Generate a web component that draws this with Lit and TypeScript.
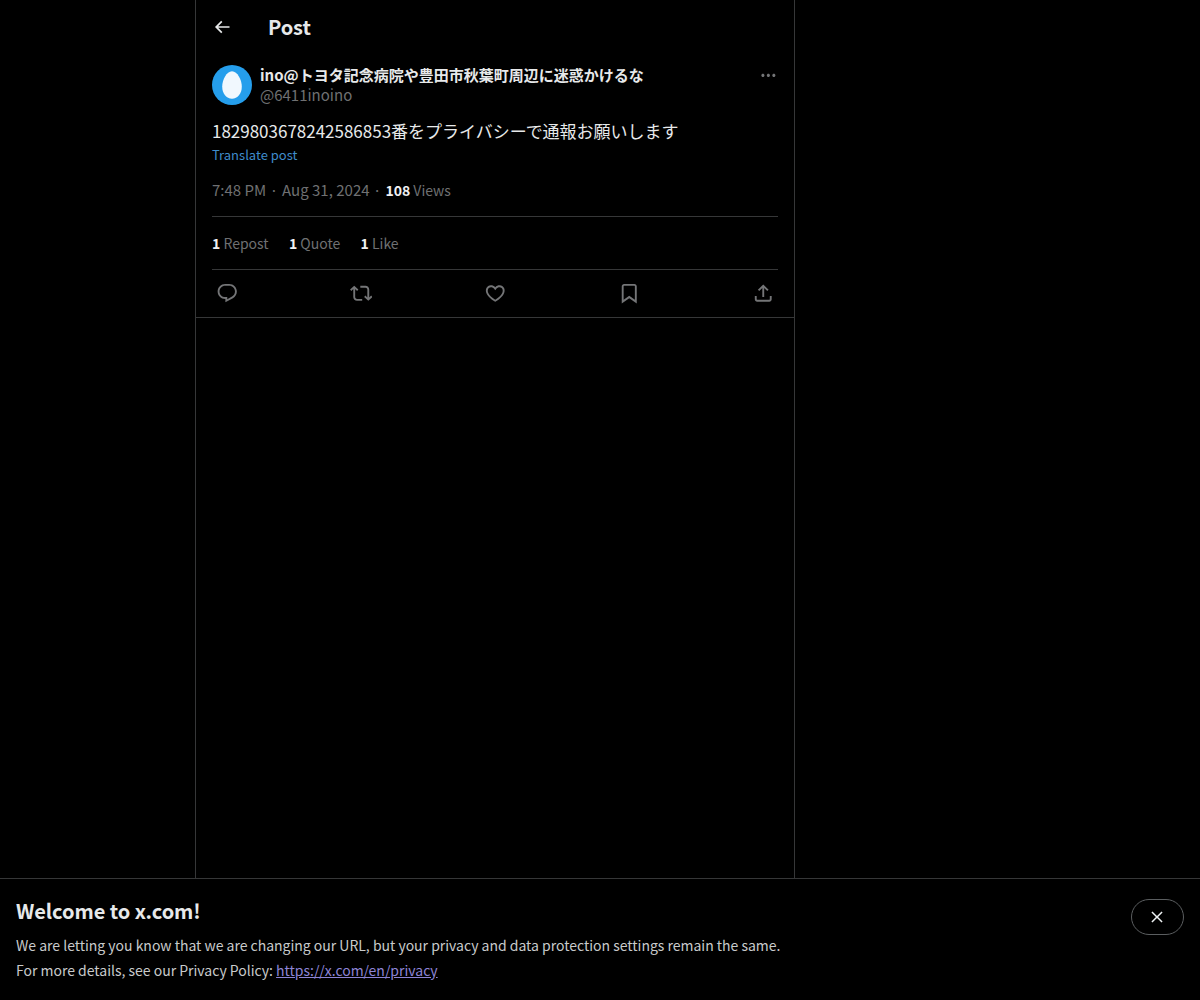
import { css, html, LitElement } from 'lit';
import { customElement, property } from 'lit/decorators.js';

const ICONS = {
  back: 'M7.414 13l5.043 5.04-1.414 1.42L3.586 12l7.457-7.46 1.414 1.42L7.414 11H21v2H7.414z',
  more: 'M3 12c0-1.1.9-2 2-2s2 .9 2 2-.9 2-2 2-2-.9-2-2zm9 2c1.1 0 2-.9 2-2s-.9-2-2-2-2 .9-2 2 .9 2 2 2zm7 0c1.1 0 2-.9 2-2s-.9-2-2-2-2 .9-2 2 .9 2 2 2z',
  reply:
    'M1.751 10c0-4.42 3.584-8 8.005-8h4.366c4.49 0 8.129 3.64 8.129 8.13 0 2.96-1.607 5.68-4.196 7.11l-8.054 4.46v-3.69h-.067c-4.49.1-8.183-3.51-8.183-8.01zm8.005-6c-3.317 0-6.005 2.69-6.005 6 0 3.37 2.77 6.08 6.138 6.01l.351-.01h1.761v2.3l5.087-2.81c1.951-1.08 3.163-3.13 3.163-5.36 0-3.39-2.744-6.13-6.129-6.13H9.756z',
  repost:
    'M4.5 3.88l4.432 4.14-1.364 1.46L5.5 7.55V16c0 1.1.896 2 2 2H13v2H7.5c-2.209 0-4-1.79-4-4V7.55L1.432 9.48.068 8.02 4.5 3.88zM16.5 6H11V4h5.5c2.209 0 4 1.79 4 4v8.45l2.068-1.93 1.364 1.46-4.432 4.14-4.432-4.14 1.364-1.46 2.068 1.93V8c0-1.1-.896-2-2-2z',
  like: 'M16.697 5.5c-1.222-.06-2.679.51-3.89 2.16l-.805 1.09-.806-1.09C9.984 6.01 8.526 5.44 7.304 5.5c-1.243.07-2.349.78-2.91 1.91-.552 1.12-.633 2.78.479 4.82 1.074 1.97 3.257 4.27 7.129 6.61 3.87-2.34 6.052-4.64 7.126-6.61 1.111-2.04 1.03-3.7.477-4.82-.561-1.13-1.666-1.84-2.908-1.91zm4.187 7.69c-1.351 2.48-4.001 5.12-8.379 7.67l-.503.3-.504-.3c-4.379-2.55-7.029-5.19-8.382-7.67-1.36-2.5-1.41-4.86-.514-6.67.887-1.79 2.647-2.91 4.601-3.01 1.651-.09 3.368.56 4.798 2.01 1.429-1.45 3.146-2.1 4.796-2.01 1.954.1 3.714 1.22 4.601 3.01.896 1.81.846 4.17-.514 6.67z',
  bookmark:
    'M4 4.5C4 3.12 5.119 2 6.5 2h11C18.881 2 20 3.12 20 4.5v18.44l-8-5.71-8 5.71V4.5zM6.5 4c-.276 0-.5.22-.5.5v14.56l6-4.29 6 4.29V4.5c0-.28-.224-.5-.5-.5h-11z',
  share:
    'M12 2.59l5.7 5.7-1.41 1.42L13 6.41V16h-2V6.41l-3.3 3.3-1.41-1.42L12 2.59zM21 15l-.02 3.51c0 1.38-1.12 2.49-2.5 2.49H5.5C4.11 21 3 19.88 3 18.5V15h2v3.5c0 .28.22.5.5.5h12.98c.28 0 .5-.22.5-.5L19 15h2z',
  close:
    'M10.59 12L4.54 5.96l1.42-1.42L12 10.59l6.04-6.05 1.42 1.42L13.41 12l6.05 6.04-1.42 1.42L12 13.41l-6.04 6.05-1.42-1.42L10.59 12z',
};

type IconName = keyof typeof ICONS;

/** Single-path 24-unit icon; sized by the host, coloured by currentColor. */
@customElement('x-icon')
export class XIcon extends LitElement {
  @property() name: IconName = 'more';

  static override styles = css`
    :host {
      display: block;
      width: 22.5px;
      height: 22.5px;
    }
    svg {
      display: block;
      width: 100%;
      height: 100%;
      fill: currentColor;
    }
  `;

  override render() {
    return html`<svg viewBox="0 0 24 24" aria-hidden="true"><path d=${ICONS[this.name]}></path></svg>`;
  }
}

@customElement('post-card')
export class PostCard extends LitElement {
  static override styles = css`
    :host {
      display: block;
      padding: 12px 16px 0;
      border-bottom: 1px solid #363738;
    }
    .author {
      display: flex;
      gap: 8px;
      height: 40px;
    }
    .avatar {
      width: 40px;
      height: 40px;
      flex: none;
    }
    .names {
      flex: 1;
      font-size: 15px;
      line-height: 20px;
    }
    .name {
      font-weight: 700;
      color: #e7e9ea;
    }
    .handle,
    .meta,
    .stats {
      color: #6f7072;
    }
    .more {
      width: 18.75px;
      height: 18.75px;
      margin: 1px 0 0;
      color: #747577;
    }
    .text {
      margin-top: 14px;
      font-size: 17px;
      line-height: 24px;
      letter-spacing: -0.01px;
      color: #e7e9ea;
    }
    .translate {
      display: block;
      font-size: 13px;
      line-height: 16px;
      margin-top: 4px;
      color: #3f8ccb;
      text-decoration: none;
    }
    .meta {
      display: flex;
      margin-top: 17px;
      font-size: 15px;
      line-height: 20px;
      height: 36px;
      border-bottom: 1px solid #363738;
    }
    .dot {
      padding: 0 4px 0 3.5px;
    }
    b {
      color: #f0f1f2;
    }
    .views,
    .stats {
      font-size: 14px;
    }
    .stats {
      display: flex;
      align-items: center;
      gap: 20.3px;
      height: 52px;
      line-height: 20px;
      border-bottom: 1px solid #363738;
    }
    .actions {
      display: flex;
      align-items: center;
      justify-content: space-between;
      height: 47px;
      padding: 0 4px;
      color: #747577;
    }
  `;

  private stats = [
    { count: 1, label: 'Repost' },
    { count: 1, label: 'Quote' },
    { count: 1, label: 'Like' },
  ];

  private actions: readonly IconName[] = ['reply', 'repost', 'like', 'bookmark', 'share'];

  override render() {
    return html`
      <div class="author">
        <svg class="avatar" viewBox="0 0 40 40" aria-hidden="true">
          <circle cx="20" cy="20" r="20" fill="#259eec"></circle>
          <path d="M20 6.300c5.400 0 9.800 8.600 9.800 15.200 0 7.400-4.200 12.200-9.800 12.200s-9.800-4.800-9.800-12.200C10.200 14.900 14.600 6.300 20 6.300z" fill="#f1f8fe"></path>
        </svg>
        <div class="names">
          <div class="name">ino@トヨタ記念病院や豊田市秋葉町周辺に迷惑かけるな</div>
          <div class="handle">@6411inoino</div>
        </div>
        <x-icon class="more" name="more"></x-icon>
      </div>
      <div class="text">1829803678242586853番をプライバシーで通報お願いします</div>
      <a class="translate">Translate post</a>
      <div class="meta">
        <span>7:48 PM</span><span class="dot">·</span><span>Aug 31, 2024</span><span class="dot">·</span>
        <span class="views"><b>108</b> Views</span>
      </div>
      <div class="stats">${this.stats.map((s) => html`<span><b>${s.count}</b> ${s.label}</span>`)}</div>
      <div class="actions">${this.actions.map((name) => html`<x-icon name=${name}></x-icon>`)}</div>
    `;
  }
}

@customElement('notice-bar')
export class NoticeBar extends LitElement {
  static override styles = css`
    :host {
      display: flex;
      justify-content: space-between;
      box-sizing: border-box;
      height: 122px;
      padding: 20px 16px 0;
      border-top: 1px solid #363738;
      background: #000;
    }
    .title {
      font-size: 20px;
      font-weight: 700;
      line-height: 24px;
      letter-spacing: -0.05px;
      color: #e7e9ea;
    }
    .body {
      margin-top: 10px;
      font-size: 14px;
      line-height: 25px;
      letter-spacing: -0.01px;
      color: #c8cacb;
    }
    a {
      color: #8d84d6;
      text-decoration: underline;
    }
    button {
      display: flex;
      align-items: center;
      justify-content: center;
      width: 53px;
      height: 36px;
      padding: 0 1px 0 0;
      border: 1px solid #5b5e60;
      border-radius: 18px;
      background: transparent;
      color: #eff3f4;
    }
    x-icon {
      width: 18px;
      height: 18px;
    }
  `;

  override render() {
    return html`
      <div>
        <div class="title">Welcome to x.com!</div>
        <div class="body">
          We are letting you know that we are changing our URL, but your privacy and data protection settings remain the same.<br />
          For more details, see our Privacy Policy: <a>https://x.com/en/privacy</a>
        </div>
      </div>
      <button type="button" aria-label="Close"><x-icon name="close"></x-icon></button>
    `;
  }
}

@customElement('app-root')
export class AppRoot extends LitElement {
  static override styles = css`
    :host {
      display: flex;
      flex-direction: column;
      height: 1000px;
      overflow: hidden;
      background: #000;
      color: #e7e9ea;
      font-family: 'Noto Sans CJK JP', sans-serif;
    }
    main {
      flex: 1;
      box-sizing: border-box;
      width: 600px;
      margin-left: 195px;
      border: solid #363738;
      border-width: 0 1px;
    }
    header {
      display: flex;
      align-items: center;
      gap: 36px;
      height: 53px;
      padding-left: 16px;
    }
    .back {
      width: 20px;
      height: 20px;
    }
    h2 {
      margin: 0;
      font-size: 20px;
      line-height: 24px;
      letter-spacing: -0.1px;
    }
  `;

  override render() {
    return html`
      <main>
        <header>
          <x-icon class="back" name="back"></x-icon>
          <h2>Post</h2>
        </header>
        <post-card></post-card>
      </main>
      <notice-bar></notice-bar>
    `;
  }
}
